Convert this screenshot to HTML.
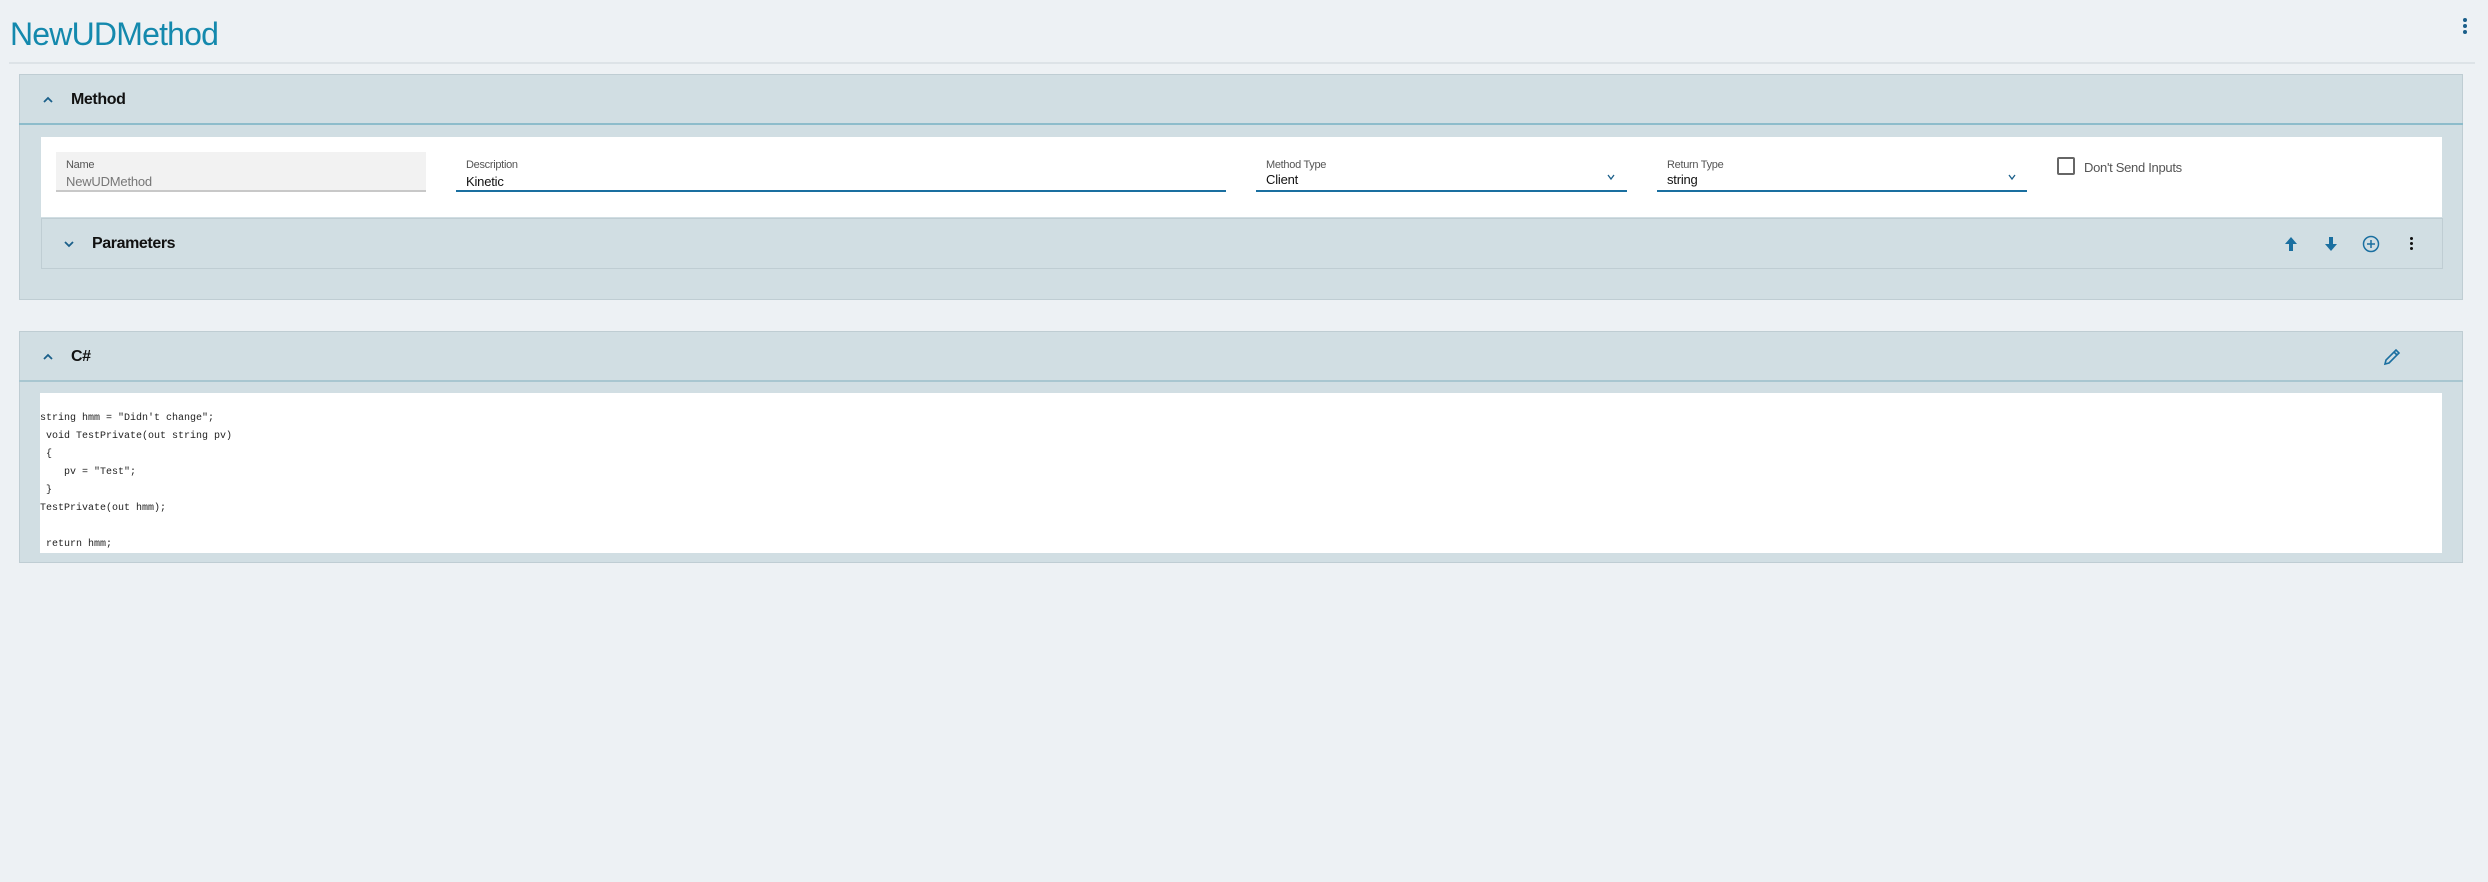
<!DOCTYPE html>
<html><head><meta charset="utf-8"><style>
*{box-sizing:border-box;margin:0;padding:0}
body{width:2488px;height:882px;background:#edf1f4;font-family:"Liberation Sans",sans-serif;position:relative;overflow:hidden}
.a{position:absolute}
.title{left:10px;top:16px;font-size:32px;color:#1489ad;letter-spacing:-0.8px}
.panel{background:#d1dee3;border:1px solid #bfcdd3}
.lbl{font-size:11px;color:#555;letter-spacing:-0.3px}
.val{font-size:13px;color:#111;letter-spacing:-0.2px}
.hdr{font-size:16px;color:#111;font-weight:bold;letter-spacing:-0.4px}
.code{font-family:"Liberation Mono",monospace;font-size:10px;color:#222;line-height:18px;white-space:pre}
</style></head><body>
<div class="a title">NewUDMethod</div>
<div class="a" style="left:2463px;top:18px;width:4px;height:16px">
<div class="a" style="left:0;top:0;width:4px;height:4px;border-radius:2px;background:#1a5f8a"></div>
<div class="a" style="left:0;top:6px;width:4px;height:4px;border-radius:2px;background:#1a5f8a"></div>
<div class="a" style="left:0;top:12px;width:4px;height:4px;border-radius:2px;background:#1a5f8a"></div></div>
<div class="a" style="left:9px;top:62px;width:2466px;height:2px;background:#dde3e7"></div>

<div class="a panel" style="left:19px;top:74px;width:2444px;height:226px"></div>
<div class="a" style="left:19px;top:123px;width:2444px;height:2px;background:#8dbccb"></div>
<svg class="a" style="left:41px;top:94px" width="14" height="12"><path d="M3 8 L7 4 L11 8" fill="none" stroke="#1a5f8a" stroke-width="1.8"/></svg>
<div class="a hdr" style="left:71px;top:91px">Method</div>

<div class="a" style="left:41px;top:137px;width:2401px;height:80px;background:#fff"></div>
<div class="a" style="left:56px;top:152px;width:370px;height:40px;background:#f2f2f2;border-bottom:2px solid #c8c8c8"></div>
<div class="a lbl" style="left:66px;top:159px">Name</div>
<div class="a val" style="left:66px;top:174px;color:#777">NewUDMethod</div>

<div class="a" style="left:456px;top:190px;width:770px;height:2px;background:#1a6fa0"></div>
<div class="a lbl" style="left:466px;top:159px">Description</div>
<div class="a val" style="left:466px;top:174px">Kinetic</div>

<div class="a" style="left:1256px;top:190px;width:371px;height:2px;background:#1a6fa0"></div>
<div class="a lbl" style="left:1266px;top:159px">Method Type</div>
<div class="a val" style="left:1266px;top:172px">Client</div>
<svg class="a" style="left:1605px;top:172px" width="12" height="10"><path d="M3 3 L6 7 L9 3" fill="none" stroke="#1a5f8a" stroke-width="1.3"/></svg>

<div class="a" style="left:1657px;top:190px;width:370px;height:2px;background:#1a6fa0"></div>
<div class="a lbl" style="left:1667px;top:159px">Return Type</div>
<div class="a val" style="left:1667px;top:172px">string</div>
<svg class="a" style="left:2006px;top:172px" width="12" height="10"><path d="M3 3 L6 7 L9 3" fill="none" stroke="#1a5f8a" stroke-width="1.3"/></svg>

<div class="a" style="left:2057px;top:157px;width:18px;height:18px;border:2px solid #666;border-radius:2px"></div>
<div class="a" style="left:2084px;top:160px;font-size:13px;color:#555;letter-spacing:-0.3px">Don't Send Inputs</div>

<div class="a panel" style="left:41px;top:218px;width:2402px;height:51px"></div>
<svg class="a" style="left:62px;top:238px" width="14" height="12"><path d="M3 4 L7 8 L11 4" fill="none" stroke="#1a5f8a" stroke-width="1.8"/></svg>
<div class="a hdr" style="left:92px;top:235px">Parameters</div>
<svg class="a" style="left:2283px;top:236px" width="16" height="16"><path d="M8 1 L14 8 L10 8 L10 15 L6 15 L6 8 L2 8 Z" fill="#1a6fa0"/></svg>
<svg class="a" style="left:2323px;top:236px" width="16" height="16"><path d="M8 15 L14 8 L10 8 L10 1 L6 1 L6 8 L2 8 Z" fill="#1a6fa0"/></svg>
<svg class="a" style="left:2362px;top:235px" width="18" height="18"><circle cx="9" cy="9" r="7.5" fill="none" stroke="#1a6fa0" stroke-width="1.5"/><path d="M9 5 V13 M5 9 H13" stroke="#1a6fa0" stroke-width="1.5"/></svg>
<div class="a" style="left:2410px;top:237px;width:3px;height:3px;background:#111;border-radius:2px"></div>
<div class="a" style="left:2410px;top:242px;width:3px;height:3px;background:#111;border-radius:2px"></div>
<div class="a" style="left:2410px;top:247px;width:3px;height:3px;background:#111;border-radius:2px"></div>

<div class="a panel" style="left:19px;top:331px;width:2444px;height:232px"></div>
<div class="a" style="left:19px;top:380px;width:2444px;height:2px;background:#a8c6d0"></div>
<svg class="a" style="left:41px;top:351px" width="14" height="12"><path d="M3 8 L7 4 L11 8" fill="none" stroke="#1a5f8a" stroke-width="1.8"/></svg>
<div class="a hdr" style="left:71px;top:348px">C#</div>
<svg class="a" style="left:2383px;top:348px" width="18" height="18"><path d="M2 16 L3 12 L13 2 L16 5 L6 15 Z M11 4 L14 7" fill="none" stroke="#1a6fa0" stroke-width="1.6"/></svg>

<div class="a" style="left:40px;top:393px;width:2402px;height:160px;background:#fff"></div>
<div class="a code" style="left:40px;top:410px">string hmm = "Didn't change";
 void TestPrivate(out string pv)
 {
    pv = "Test";
 }
TestPrivate(out hmm);

 return hmm;</div>
</body></html>
